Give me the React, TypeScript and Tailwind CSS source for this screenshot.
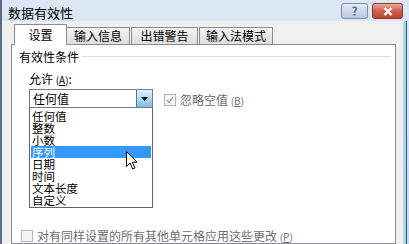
import React from "react"

const font = { fontFamily: '"Noto Sans CJK SC", "Liberation Sans", sans-serif' }

const items = ["任何值", "整数", "小数", "序列", "日期", "时间", "文本长度", "自定义"]

function App() {
	const selected = 3
	return (
		<div
			className="w-[409px] h-[244px] overflow-hidden flex flex-col bg-gradient-to-b from-[#dce8f5] to-[#c6d8ee] border-l-2 border-[#5b6b80] relative"
			style={font}
		>
			{/* title bar */}
			<div className="h-[28px] flex items-start justify-between pl-[6px] pr-[6px]">
				<span className="text-[13px] leading-[13px] text-black mt-[6px]">数据有效性</span>
				<div className="flex gap-[4px] mt-[3px]">
					<div className="w-[27px] h-[16px] rounded-[3px] border border-[#7d90ab] bg-gradient-to-b from-[#e4ecf6] to-[#b8c9df] flex items-center justify-center">
						<span className="text-[12px] leading-none font-bold text-[#5a6f8c]">?</span>
					</div>
					<div className="w-[31px] h-[16px] rounded-[3px] border border-[#8a3a2e] bg-gradient-to-b from-[#e9a99b] via-[#d0604e] to-[#c24330] flex items-center justify-center">
						<svg width="10" height="9" viewBox="0 0 10 9">
							<path d="M1.5 1 L8.5 8 M8.5 1 L1.5 8" stroke="#fff" strokeWidth="2.4" />
						</svg>
					</div>
				</div>
			</div>

			{/* body */}
			<div className="flex-1 flex mr-[2px]">
				<div className="flex-1 bg-[#f0f0f0] pt-[3px] pl-[9px] pr-[7px] flex flex-col">
					{/* tabs */}
					<div className="flex items-end h-[20px] pl-[3px] relative z-10">
						<div className="h-[21px] w-[53px] border border-b-0 border-[#898c95] bg-white flex items-center justify-center text-[12px] text-black -mb-px">
							设置
						</div>
						<div className="h-[17px] w-[63px] border border-b-0 border-l-0 border-[#898c95] bg-gradient-to-b from-[#f3f3f3] to-[#dedede] flex items-center justify-center text-[12px] text-black">
							输入信息
						</div>
						<div className="h-[17px] w-[67px] border border-b-0 border-[#898c95] ml-px bg-gradient-to-b from-[#f3f3f3] to-[#dedede] flex items-center justify-center text-[12px] text-black">
							出错警告
						</div>
						<div className="h-[17px] w-[74px] border border-b-0 border-[#898c95] ml-px bg-gradient-to-b from-[#f3f3f3] to-[#dedede] flex items-center justify-center text-[12px] text-black">
							输入法模式
						</div>
					</div>

					{/* panel */}
					<div className="flex-1 bg-white border border-[#898c95] pl-[7px] pr-[4px] pt-[5px] relative">
						<div className="flex items-center gap-[3px]">
							<span className="text-[12px] leading-[13px] text-black">有效性条件</span>
							<div className="flex-1 h-px bg-[#dcdcdc]" />
						</div>

						<div className="pl-[10px] mt-[9px]">
							<div className="text-[12px] leading-[13px] text-black">
								允许 <span className="text-[10px]">(<span className="underline">A</span>)</span>:
							</div>

							<div className="flex items-start mt-[3px]">
								<div className="w-[124px] flex flex-col">
									{/* combo */}
									<div className="h-[19px] border border-[#6f7d8e] bg-white flex">
										<span className="flex-1 text-[12px] leading-[17px] pl-[3px] text-black">任何值</span>
										<div className="w-[16px] h-full border-l border-[#3c7fb1] bg-gradient-to-b from-[#e3f3fc] to-[#7fbde6] flex items-center justify-center">
											<svg width="7" height="4" viewBox="0 0 7 4">
												<path d="M0 0 H7 L3.5 4 Z" fill="#000" />
											</svg>
										</div>
									</div>
									{/* list */}
									<div className="h-[100px] border border-t-0 border-[#646464] bg-white pt-[2px] px-px overflow-hidden">
										{items.map((it, i) => (
											<div
												key={it}
												className={`h-[12px] text-[11.5px] leading-[12px] pl-[1px] ${
													i === selected ? "bg-[#3399ff] text-white" : "text-black"
												}`}
											>
												{it}
											</div>
										))}
									</div>
								</div>

								<div className="flex items-center ml-[11px] mt-[4px] gap-[4px]">
									<div className="w-[12px] h-[12px] border border-[#b5b5b5] bg-[#f4f4f4] flex items-center justify-center">
										<svg width="8" height="8" viewBox="0 0 8 8">
											<path d="M1 4 L3 6.5 L7 1" stroke="#a8a8a8" strokeWidth="1.3" fill="none" />
										</svg>
									</div>
									<span className="text-[12px] leading-[13px] text-[#6d6d6d]">
										忽略空值 <span className="text-[10px]">(<span className="underline">B</span>)</span>
									</span>
								</div>
							</div>
						</div>

						<div className="flex items-center gap-[4px] mt-[21px] pl-[2px]">
							<div className="w-[12px] h-[12px] border border-[#b5b5b5] bg-[#f4f4f4]" />
							<span className="text-[12px] leading-[13px] text-[#6d6d6d]">
								对有同样设置的所有其他单元格应用这些更改 <span className="text-[10px]">(<span className="underline">P</span>)</span>
							</span>
						</div>

						{/* cursor */}
						<svg className="absolute left-[114px] top-[106px]" width="13" height="19" viewBox="0 0 13 19">
							<path d="M0.5 0.5 V15.5 L4 12 L6.8 18 L9 17 L6.3 11.2 H11 Z" fill="#fff" stroke="#000" strokeWidth="1" />
						</svg>
					</div>
				</div>
				<div className="w-[4px] bg-gradient-to-r from-[#c6d8ee] to-[#8fd0e8] border-r border-[#4a5a70]" />
			</div>
		</div>
	)
}

export default App
